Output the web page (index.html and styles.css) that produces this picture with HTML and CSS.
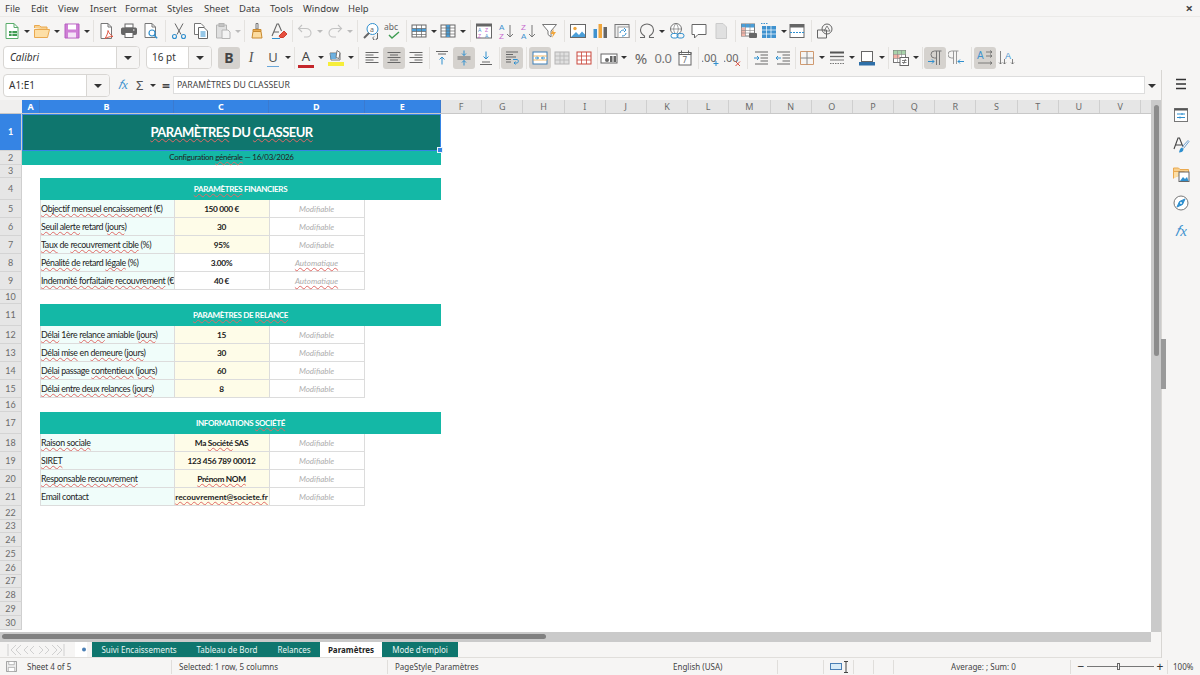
FILE: index.html
```html
<!DOCTYPE html>
<html lang="fr">
<head>
<meta charset="utf-8">
<title>Paramètres</title>
<link rel="stylesheet" href="styles.css">
</head>
<body>
<div class="app">
  <nav class="menubar">
    <span class="m1">File</span><span class="m2">Edit</span><span class="m3">View</span><span class="m4">Insert</span><span class="m5">Format</span><span class="m6">Styles</span><span class="m7">Sheet</span><span class="m8">Data</span><span class="m9">Tools</span><span class="m10">Window</span><span class="m11">Help</span>
    <span class="close">×</span>
  </nav>

  <div class="tb tb1">
    <button class="b"><svg class="i" viewBox="0 0 18 18"><path d="M3 1.500h8l4 4v11H3z" fill="#fff" stroke="#5aac6b"/><path d="M11 1.500v4h4" stroke="#5aac6b"/><rect x="6" y="9" width="8" height="5" fill="#3f9c52" stroke="none"/><path d="M9 9v5M6 11.500h8" stroke="#fff" stroke-width=".7"/></svg></button><i class="car"></i>
    <button class="b"><svg class="i" viewBox="0 0 18 18"><path d="M1.500 6V3.500h5l1.500 1.500h6V8" fill="#f8d08e" stroke="#eaa94f"/><path d="M1.500 15.500V7.500h15l-2 8z" fill="#fddfa6" stroke="#eaa94f"/></svg></button><i class="car"></i>
    <button class="b"><svg class="i" viewBox="0 0 18 18"><path d="M2 2h14v14H2z" fill="#cf7fd6" stroke="#b65fc0"/><rect x="5" y="2.500" width="8" height="5" fill="#fff" stroke="none"/><rect x="5" y="10.500" width="8" height="5" fill="#f5e3f7" stroke="none"/></svg></button><i class="car"></i>
    <u class="sep"></u>
    <button class="b"><svg class="i" viewBox="0 0 18 18"><path d="M4 1.500h7l3.500 3.500v11.500H4z" fill="#fff" stroke="#777"/><path d="M11 1.500V5h3.500" stroke="#777"/><path d="M8 16.500c2-3 3-6 3-8 1 3 3 5 5 6-3 0-5 .5-8 2z" stroke="#e05a47"/></svg></button>
    <button class="b b-g1"><svg class="i" viewBox="0 0 18 18"><rect x="5" y="2" width="8" height="4" fill="#fff" stroke="#666"/><rect x="1.500" y="6" width="15" height="6.500" rx="1" fill="#666" stroke="#666"/><rect x="5" y="10.500" width="8" height="5" fill="#fff" stroke="#666"/><path d="M13 8h1.500" stroke="#fff"/></svg></button>
    <button class="b"><svg class="i" viewBox="0 0 18 18"><path d="M3 1.500h7l3.500 3.500v10.500H3z" fill="#fff" stroke="#777"/><path d="M10 1.500V5h3.500" stroke="#777"/><circle cx="10" cy="11" r="3" fill="#fff" stroke="#2f8fce" stroke-width="1.200"/><path d="M12.200 13.200l3 3" stroke="#2f8fce" stroke-width="1.400"/></svg></button>
    <u class="sep sep-w"></u>
    <button class="b"><svg class="i" viewBox="0 0 18 18"><path d="M5 1.500l6 11M13 1.500l-6 11" stroke="#666"/><circle cx="4.500" cy="14.500" r="2" stroke="#2f8fce" stroke-width="1.100"/><circle cx="13.500" cy="14.500" r="2" stroke="#2f8fce" stroke-width="1.100"/></svg></button>
    <button class="b"><svg class="i" viewBox="0 0 18 18"><path d="M2.500 1.500h6.500l3 3v8H2.500z" fill="#fff" stroke="#777"/><path d="M6.500 5.500H12l3.500 3.500v7.500h-9z" fill="#fff" stroke="#666"/><path d="M8.500 10h5M8.500 12h5M8.500 14h5" stroke="#2f8fce"/></svg></button>
    <button class="b"><svg class="i dim" viewBox="0 0 18 18"><path d="M2.500 3h10v13h-10z" fill="#ddd" stroke="#aaa"/><rect x="5" y="1.500" width="5" height="3" fill="#bbb" stroke="#aaa"/><path d="M8 8h6l2 2v6.500H8z" fill="#f3f3f3" stroke="#aaa"/></svg></button><i class="car dimc"></i>
    <u class="sep"></u>
    <button class="b"><svg class="i" viewBox="0 0 18 18"><path d="M8 1.500h2V7H8z" stroke="#777"/><path d="M5 7.500h8v2H5z" fill="#e9ac52" stroke="#c98a30"/><path d="M5 9.500h8l1 6.500H4z" fill="#fcdca0" stroke="#c98a30"/></svg></button>
    <button class="b"><svg class="i" viewBox="0 0 18 18"><path d="M2 14L7 2h1.500l3 7M4 10h5" stroke="#666" stroke-width="1.100"/><path d="M9 14l5-5 3 3-3.500 3.500H10z" fill="#e6503f" stroke="#d04030"/><path d="M2 16.500h8" stroke="#2f8fce"/></svg></button>
    <u class="sep"></u>
    <button class="b"><svg class="i dim" viewBox="0 0 18 18"><path d="M6 3L2.500 6.500 6 10M3 6.500h7c3 0 5 2 5 4.500s-2 4-4 4H8" stroke="#bbb" stroke-width="1.100"/></svg></button><i class="car dimc"></i>
    <button class="b"><svg class="i dim" viewBox="0 0 18 18"><path d="M12 3l3.500 3.500L12 10M15 6.500H8c-3 0-5 2-5 4.500s2 4 4 4h3" stroke="#bbb" stroke-width="1.100"/></svg></button><i class="car dimc"></i>
    <u class="sep sep-x"></u>
    <button class="b"><svg class="i" viewBox="0 0 18 18"><circle cx="10.500" cy="7" r="5.500" fill="#fff" stroke="#2f8fce"/><text x="8" y="9.500" class="svt" font-size="7">a</text><path d="M7 11l-5 5" stroke="#666" stroke-width="2"/><path d="M12 14.500a2 2 0 1 0 3 1.500M15.500 11v6" stroke="#666"/></svg></button>
    <button class="b"><svg class="i" viewBox="0 0 18 18"><text x="0" y="8" class="svt" font-size="8.500">abc</text><path d="M5 13l3 3 7-6" stroke="#3f9c52" stroke-width="1.400"/></svg></button>
    <u class="sep"></u>
    <button class="b"><svg class="i" viewBox="0 0 18 18"><rect x="2" y="3" width="14" height="12" fill="#fff" stroke="#666"/><rect x="2" y="6.500" width="14" height="3" fill="#4a9ed8" stroke="none"/><path d="M2 6.500h14M2 9.500h14M2 12.500h14M6.500 3v12M11.500 3v12" stroke="#666" stroke-width=".7"/></svg></button><i class="car"></i>
    <button class="b b-n1"><svg class="i" viewBox="0 0 18 18"><rect x="2" y="3" width="14" height="12" fill="#fff" stroke="#666"/><rect x="7" y="3" width="4" height="12" fill="#4a9ed8" stroke="none"/><path d="M7 3v12M11 3v12M2 6h14M2 9h14M2 12h14" stroke="#666" stroke-width=".7"/></svg></button><i class="car"></i>
    <u class="sep sep-w"></u>
    <button class="b"><svg class="i" viewBox="0 0 18 18"><rect x="1.500" y="2" width="15" height="14" fill="#fff" stroke="#666"/><rect x="1.500" y="2" width="15" height="2.500" fill="#666" stroke="none"/><text x="3" y="9.800" class="svt sv-b" font-size="5">A</text><text x="10" y="9.800" class="svt sv-p" font-size="5">Z</text><text x="3" y="15.500" class="svt sv-p" font-size="5">Z</text><text x="10" y="15.500" class="svt sv-b" font-size="5">A</text></svg></button>
    <button class="b"><svg class="i" viewBox="0 0 18 18"><text x="2" y="7.500" class="svt sv-b" font-size="8">A</text><text x="2" y="16.800" class="svt sv-p" font-size="8">Z</text><path d="M13 3v12M10 12l3 3 3-3" stroke="#777"/></svg></button>
    <button class="b"><svg class="i" viewBox="0 0 18 18"><text x="2" y="7.500" class="svt sv-p" font-size="8">Z</text><text x="2" y="16.800" class="svt sv-b" font-size="8">A</text><path d="M13 3v12M10 12l3 3 3-3" stroke="#777"/></svg></button>
    <button class="b"><svg class="i" viewBox="0 0 18 18"><path d="M1.500 2.500h14L10 9v6l-3-2.500V9z" fill="#fff" stroke="#777"/><path d="M12.500 7l-3 5h2.500l-1 4 4-6h-2.500z" fill="#f0a63c" stroke="none"/></svg></button>
    <u class="sep sep-w"></u>
    <button class="b"><svg class="i" viewBox="0 0 18 18"><rect x="1.500" y="2.500" width="15" height="13" fill="#fff" stroke="#666"/><circle cx="6" cy="6.500" r="1.700" fill="#f0a63c" stroke="none"/><path d="M2 15l5-5 3 3 3-3.500 3 3V15z" fill="#4a9ed8" stroke="none"/></svg></button>
    <button class="b"><svg class="i" viewBox="0 0 18 18"><rect x="2.500" y="7" width="3.500" height="9" fill="#3f92cf" stroke="none"/><rect x="7.500" y="2" width="3.500" height="14" fill="#f0a63c" stroke="none"/><rect x="12.500" y="5" width="3.500" height="11" fill="#666" stroke="none"/></svg></button>
    <button class="b"><svg class="i" viewBox="0 0 18 18"><rect x="2" y="2.500" width="14" height="13" fill="#eee" stroke="#777"/><rect x="5" y="5" width="11" height="10.500" fill="#fff" stroke="#999"/><path d="M7 11c0-2 2-3 4-3M11 6l2 2-2 2M13 11c0 2-2 3-4 3" stroke="#2f8fce"/></svg></button>
    <u class="sep sep-n"></u>
    <button class="b"><svg class="i" viewBox="0 0 18 18"><path d="M2 15.500h4.500V14C4 12.500 2.500 10.500 2.500 8c0-3.500 3-6 6.500-6s6.500 2.500 6.500 6c0 2.500-1.500 4.500-4 6v1.500H16" stroke="#666" stroke-width="1.100"/></svg></button><i class="car"></i>
    <button class="b"><svg class="i" viewBox="0 0 18 18"><circle cx="8" cy="7" r="5.500" fill="#fff" stroke="#777"/><path d="M2.500 7h11M8 1.500c-3 3-3 8 0 11M8 1.500c3 3 3 8 0 11" stroke="#777" stroke-width=".7"/><rect x="3" y="11.500" width="7" height="4.500" rx="2.200" fill="#fff" stroke="#2f8fce"/><rect x="9" y="11.500" width="7" height="4.500" rx="2.200" stroke="#2f8fce"/></svg></button>
    <button class="b"><svg class="i" viewBox="0 0 18 18"><path d="M2 2.500h14v10H8l-3.500 3.500v-3.500H2z" fill="#fff" stroke="#666"/></svg></button>
    <button class="b"><svg class="i dim" viewBox="0 0 18 18"><path d="M4 1.500h7l3.500 3.500v11.500H4z" fill="#ddd" stroke="#c4c4c4"/></svg></button>
    <u class="sep sep-w"></u>
    <button class="b"><svg class="i" viewBox="0 0 18 18"><rect x="1.500" y="2" width="13" height="12" fill="#fff" stroke="#777"/><rect x="1.500" y="2" width="13" height="3.500" fill="#4a9ed8" stroke="none"/><rect x="1.500" y="5.500" width="4" height="8.500" fill="#f1b4a8" stroke="none"/><path d="M1.500 8.500h13M1.500 11h13M5.500 2v12M10 2v12" stroke="#888" stroke-width=".6"/><rect x="9" y="11" width="8" height="5" rx="1" fill="#666" stroke="none"/></svg></button>
    <button class="b b-n2"><svg class="i" viewBox="0 0 18 18"><rect x="2" y="4" width="14" height="12" fill="#3f92cf" stroke="none"/><path d="M2 8h14M2 12h14M6.500 4v12M11 4v12" stroke="#fff" stroke-width=".7"/><path d="M1 1.500h7" stroke="#3f92cf" stroke-dasharray="1.500 1"/></svg></button><i class="car"></i>
    <button class="b b-n2"><svg class="i" viewBox="0 0 18 18"><rect x="2" y="2.500" width="14" height="13" fill="#fff" stroke="#666"/><rect x="2" y="2.500" width="14" height="3" fill="#666" stroke="none"/><path d="M2 10.500h14" stroke="#2f8fce" stroke-dasharray="2 1"/></svg></button>
    <u class="sep sep-w"></u>
    <button class="b"><svg class="i" viewBox="0 0 18 18"><path d="M1.500 8h9v8h-9z" stroke="#666"/><circle cx="11" cy="7" r="5" stroke="#666"/><path d="M8 9l3-5 3 5z" stroke="#666" stroke-width=".8"/></svg></button>
  </div>

  <div class="tb tb2">
    <div class="combo c-font"><span class="val it">Calibri</span><span class="drop"><i class="car big"></i></span></div>
    <div class="combo c-size"><span class="val">16 pt</span><span class="drop"><i class="car big"></i></span></div>
    <button class="b on"><span class="gl bold">B</span></button>
    <button class="b"><span class="gl ital">I</span></button>
    <button class="b"><span class="gl und">U</span></button><i class="car"></i>
    <u class="sep sep-n"></u>
    <button class="b"><span class="gl col">A</span></button><i class="car"></i>
    <button class="b"><svg class="i" viewBox="0 0 18 18"><path d="M3 4h7l3 0v7H4z" fill="#fff" stroke="#777"/><path d="M3.500 4h6v6h-6z" fill="#4a9ed8" stroke="none" opacity=".8"/><path d="M10 1.500l3 2-1 6-3-1z" fill="#fff" stroke="#777"/><rect x="1" y="13" width="16" height="4" fill="#f6ee3a" stroke="none"/></svg></button><i class="car"></i>
    <u class="sep sep-w"></u>
    <button class="b"><svg class="i" viewBox="0 0 18 18"><path d="M2.500 3.500h13M2.500 6h8M2.500 8.500h13M2.500 11h8M2.500 13.500h13" stroke="#666"/></svg></button>
    <button class="b on"><svg class="i" viewBox="0 0 18 18"><path d="M2.500 3.500h13M5 6h8M2.500 8.500h13M5 11h8M2.500 13.500h13" stroke="#666"/></svg></button>
    <button class="b"><svg class="i" viewBox="0 0 18 18"><path d="M2.500 3.500h13M7.500 6h8M2.500 8.500h13M7.500 11h8M2.500 13.500h13" stroke="#666"/></svg></button>
    <u class="sep"></u>
    <button class="b"><svg class="i" viewBox="0 0 18 18"><path d="M3 2.500h12M5 5h8" stroke="#666"/><path d="M9 15.500V8M6.500 10.500L9 8l2.500 2.500" stroke="#2f8fce"/></svg></button>
    <button class="b on"><svg class="i" viewBox="0 0 18 18"><path d="M2.500 8h13M2.500 10h13" stroke="#666"/><path d="M9 1.500V6.500M7 4.500l2 2 2-2M9 16.500V11.500M7 13.500l2-2 2 2" stroke="#2f8fce"/></svg></button>
    <button class="b"><svg class="i" viewBox="0 0 18 18"><path d="M5 13h8M3 15.500h12" stroke="#666"/><path d="M9 2.500V10M6.500 7.500L9 10l2.500-2.500" stroke="#2f8fce"/></svg></button>
    <u class="sep"></u>
    <button class="b on"><svg class="i" viewBox="0 0 18 18"><path d="M3 3h12M3 5.500h7M3 8h10M3 10.500h5M3 13h5" stroke="#666"/><path d="M10 10.500h4c1.500 0 2 3 0 3.500h-2M12.500 12.500l-1.500 1.500 1.500 1.500" stroke="#2f8fce"/></svg></button>
    <u class="sep sep-w"></u>
    <button class="b on"><svg class="i" viewBox="0 0 18 18"><rect x="2" y="3" width="14" height="12" fill="#fff" stroke="#3f7fb5"/><path d="M2 7h14M2 11h14" stroke="#f0a63c" stroke-width=".8"/><path d="M4 9h3.500M14 9h-3.500M6 7.500L7.500 9 6 10.500M12 7.500L10.500 9l1.500 1.500" stroke="#2f8fce"/></svg></button>
    <button class="b"><svg class="i dim" viewBox="0 0 18 18"><rect x="2" y="3" width="14" height="12" fill="#ddd" stroke="#aaa"/><path d="M2 7h14M2 11h14M7 3v12M11 3v12" stroke="#aaa" stroke-width=".8"/></svg></button>
    <button class="b"><svg class="i" viewBox="0 0 18 18"><rect x="2" y="3" width="14" height="12" fill="#fff" stroke="#c9483c"/><path d="M2 7h14M2 11h14M6.500 3v12M11.500 3v12" stroke="#c9483c" stroke-width=".8"/></svg></button>
    <u class="sep sep-n"></u>
    <button class="b"><svg class="i" viewBox="0 0 18 18"><rect x="1" y="5" width="16" height="9" fill="#fff" stroke="#666"/><circle cx="7" cy="11" r="2" fill="#666" stroke="none"/><rect x="10" y="7" width="2.500" height="6" fill="#666" stroke="none"/><rect x="13.500" y="7" width="2.500" height="6" fill="#666" stroke="none"/></svg></button><i class="car"></i>
    <button class="b b-pc"><span class="gl pct">%</span></button>
    <button class="b"><span class="gl num">0.0</span></button>
    <button class="b"><svg class="i" viewBox="0 0 18 18"><rect x="3" y="3.500" width="12" height="12.500" fill="#fff" stroke="#666"/><path d="M3 3.500h12v2H3zM5.500 1.500v3M12.500 1.500v3" stroke="#666"/><text x="6.500" y="14" class="svt" font-size="8">7</text></svg></button>
    <u class="sep"></u>
    <button class="b"><svg class="i" viewBox="0 0 18 18"><text x="-1" y="13" class="svt" font-size="11">.00</text><path d="M14 12v5M11.500 14.500h5" stroke="#2f8fce"/></svg></button>
    <button class="b"><svg class="i" viewBox="0 0 18 18"><text x="-1" y="13" class="svt" font-size="11">.00</text><path d="M11.500 12.500l4.500 4.500M16 12.500L11.500 17" stroke="#d9503f"/></svg></button>
    <u class="sep sep-w"></u>
    <button class="b"><svg class="i" viewBox="0 0 18 18"><path d="M3 3h13M8.500 6h7.500M8.500 9h7.500M8.500 12h7.500M3 15h13" stroke="#666"/><path d="M2 9h5M5 7l2 2-2 2" stroke="#2f8fce"/></svg></button>
    <button class="b"><svg class="i" viewBox="0 0 18 18"><path d="M3 3h13M8.500 6h7.500M8.500 9h7.500M8.500 12h7.500M3 15h13" stroke="#666"/><path d="M7 9H2M4 7L2 9l2 2" stroke="#2f8fce"/></svg></button>
    <u class="sep sep-t"></u>
    <button class="b"><svg class="i" viewBox="0 0 18 18"><path d="M2.500 2.500h13v13h-13z" stroke="#d09a70"/><path d="M9 2.500v13M2.500 9h13" stroke="#888"/></svg></button><i class="car"></i>
    <button class="b"><svg class="i" viewBox="0 0 18 18"><path d="M2 3.500h14" stroke="#555" stroke-width="2"/><path d="M2 7.500h14" stroke="#666" stroke-width="1.300"/><path d="M2 11h14" stroke="#777"/><path d="M2 14.500h14" stroke="#777" stroke-dasharray="1.500 1"/></svg></button><i class="car"></i>
    <button class="b"><svg class="i" viewBox="0 0 18 18"><rect x="3.500" y="2.500" width="11" height="10" fill="#fff" stroke="#666"/><rect x="1" y="13" width="16" height="3.500" fill="#2e6fa8" stroke="none"/></svg></button><i class="car"></i>
    <u class="sep"></u>
    <button class="b"><svg class="i" viewBox="0 0 18 18"><rect x="1.500" y="1.500" width="12" height="12" fill="#fff" stroke="#777"/><rect x="1.500" y="1.500" width="12" height="4" fill="#a8d4ab" stroke="none"/><rect x="1.500" y="5.500" width="6" height="4" fill="#f2b0a4" stroke="none"/><path d="M1.500 5.500h12M1.500 9.500h12M5.500 1.500v12M9.500 1.500v12" stroke="#888" stroke-width=".6"/><rect x="8" y="8.500" width="8.500" height="8" fill="#fff" stroke="#666"/><path d="M10 11.500h4.500M10 13.500h4.500M13.500 10l-2 5" stroke="#666" stroke-width=".8"/></svg></button><i class="car"></i>
    <u class="sep"></u>
    <button class="b on"><svg class="i" viewBox="0 0 18 18"><path d="M10.500 2v14M13.500 2v14M15.500 2h-7a3.500 3.500 0 0 0 0 7h2" stroke="#777"/><path d="M2 12.500h6M6 10.500l2 2-2 2" stroke="#2f8fce"/></svg></button>
    <button class="b"><svg class="i" viewBox="0 0 18 18"><path d="M5.500 2v13M8.500 2v13M10.500 2h-7a3.500 3.500 0 0 0 0 7h2" stroke="#999"/><path d="M16 12.500h-6M12 10.500l-2 2 2 2" stroke="#2f8fce"/></svg></button>
    <u class="sep sep-w"></u>
    <button class="b on"><svg class="i" viewBox="0 0 18 18"><text x="1" y="10" class="svt sv-b" font-size="10">A</text><path d="M10 3h6M14 1.500l2 1.500-2 1.500M10 7h6M14 5.500l2 1.500-2 1.500M2 14h14M14 12.500l2 1.500-2 1.500" stroke="#666" stroke-width=".8"/></svg></button>
    <button class="b"><svg class="i" viewBox="0 0 18 18"><text x="7" y="10" class="svt sv-b" font-size="9">A</text><path d="M2.500 2v13M1 13.500l1.500 1.500L4 13.500M6.500 10v5M5 13.500L6.500 15 8 13.500M14.500 10v5M13 13.500l1.500 1.500 1.500-1.500" stroke="#666" stroke-width=".8"/></svg></button>
  </div>

  <div class="work">
    <div class="main">
      <div class="tb3">
        <div class="combo c-name"><span class="val">A1:E1</span><span class="drop"><i class="car big"></i></span></div>
        <span class="fx">𝑓x</span>
        <span class="sigma">Σ</span><i class="car"></i>
        <span class="eq">=</span>
        <div class="input">PARAMÈTRES DU CLASSEUR</div>
        <i class="car big"></i>
      </div>

      <div class="grid-wrap">
        <div class="sheet">
          <div class="colhead">
            <span class="rh corner"></span>
            <span class="ch sel ca">A</span><span class="ch sel cb">B</span><span class="ch sel cc">C</span><span class="ch sel cd">D</span><span class="ch sel ce">E</span>
            <span class="ch n">F</span><span class="ch n">G</span><span class="ch n">H</span><span class="ch n">I</span><span class="ch n">J</span><span class="ch n">K</span><span class="ch n">L</span><span class="ch n">M</span><span class="ch n">N</span><span class="ch n">O</span><span class="ch n">P</span><span class="ch n">Q</span><span class="ch n">R</span><span class="ch n">S</span><span class="ch n">T</span><span class="ch n">U</span><span class="ch n">V</span><span class="ch n"></span>
          </div>

          <div class="row r1"><span class="rh sel">1</span><div class="title"><span class="ttl"><span class="sp">PARAMÈTRES</span> DU <span class="sp">CLASSEUR</span></span><i class="handle"></i></div></div>
          <div class="row r2"><span class="rh">2</span><div class="subtitle"><span>Configuration <span class="sp">générale</span> — 16/03/2026</span></div></div>
          <div class="row rs"><span class="rh">3</span></div>
          <div class="row r4"><span class="rh">4</span><span class="a"></span><div class="sec"><span><span class="sp">PARAMÈTRES</span> FINANCIERS</span></div></div>
          <div class="row rd"><span class="rh">5</span><span class="a"></span><div class="lab"><span class="sp">Objectif mensuel encaissement</span> (€)</div><div class="val-c ye">150 000 €</div><div class="note">Modifiable</div></div>
          <div class="row rd"><span class="rh">6</span><span class="a"></span><div class="lab"><span class="sp">Seuil alerte</span> retard (<span class="sp">jours</span>)</div><div class="val-c ye">30</div><div class="note">Modifiable</div></div>
          <div class="row rd"><span class="rh">7</span><span class="a"></span><div class="lab"><span class="sp">Taux</span> de <span class="sp">recouvrement cible</span> (%)</div><div class="val-c ye">95%</div><div class="note">Modifiable</div></div>
          <div class="row rd"><span class="rh">8</span><span class="a"></span><div class="lab"><span class="sp">Pénalité de</span> retard <span class="sp">légale</span> (%)</div><div class="val-c">3.00%</div><div class="note"><span class="sp">Automatique</span></div></div>
          <div class="row rd"><span class="rh">9</span><span class="a"></span><div class="lab"><span class="sp">Indemnité forfaitaire recouvrement</span> (€)</div><div class="val-c">40 €</div><div class="note"><span class="sp">Automatique</span></div></div>
          <div class="row rs"><span class="rh">10</span></div>
          <div class="row r4"><span class="rh">11</span><span class="a"></span><div class="sec"><span><span class="sp">PARAMÈTRES</span> DE <span class="sp">RELANCE</span></span></div></div>
          <div class="row rd"><span class="rh">12</span><span class="a"></span><div class="lab"><span class="sp">Délai</span> 1ère <span class="sp">relance</span> amiable (<span class="sp">jours</span>)</div><div class="val-c ye">15</div><div class="note">Modifiable</div></div>
          <div class="row rd"><span class="rh">13</span><span class="a"></span><div class="lab"><span class="sp">Délai mise</span> en <span class="sp">demeure</span> (<span class="sp">jours</span>)</div><div class="val-c ye">30</div><div class="note">Modifiable</div></div>
          <div class="row rd"><span class="rh">14</span><span class="a"></span><div class="lab"><span class="sp">Délai</span> passage <span class="sp">contentieux</span> (<span class="sp">jours</span>)</div><div class="val-c ye">60</div><div class="note">Modifiable</div></div>
          <div class="row rd"><span class="rh">15</span><span class="a"></span><div class="lab"><span class="sp">Délai entre deux relances</span> (<span class="sp">jours</span>)</div><div class="val-c ye">8</div><div class="note">Modifiable</div></div>
          <div class="row rs"><span class="rh">16</span></div>
          <div class="row r4"><span class="rh">17</span><span class="a"></span><div class="sec"><span>INFORMATIONS <span class="sp">SOCIÉTÉ</span></span></div></div>
          <div class="row rd"><span class="rh">18</span><span class="a"></span><div class="lab"><span class="sp">Raison sociale</span></div><div class="val-c ye">Ma <span class="sp">Société</span> SAS</div><div class="note">Modifiable</div></div>
          <div class="row rd"><span class="rh">19</span><span class="a"></span><div class="lab"><span class="sp">SIRET</span></div><div class="val-c ye">123 456 789 00012</div><div class="note">Modifiable</div></div>
          <div class="row rd"><span class="rh">20</span><span class="a"></span><div class="lab"><span class="sp">Responsable recouvrement</span></div><div class="val-c ye"><span class="sp">Prénom NOM</span></div><div class="note">Modifiable</div></div>
          <div class="row rd"><span class="rh">21</span><span class="a"></span><div class="lab">Email contact</div><div class="val-c ye email"><span class="sp">recouvrement@societe.fr</span></div><div class="note">Modifiable</div></div>
          <div class="row rs"><span class="rh">22</span></div>
          <div class="row rs"><span class="rh">23</span></div>
          <div class="row rs"><span class="rh">24</span></div>
          <div class="row rs"><span class="rh">25</span></div>
          <div class="row rs"><span class="rh">26</span></div>
          <div class="row rs"><span class="rh">27</span></div>
          <div class="row rs"><span class="rh">28</span></div>
          <div class="row rs"><span class="rh">29</span></div>
          <div class="row rs"><span class="rh">30</span></div>
        </div>
        <div class="vscroll"><div class="vthumb"></div></div>
      </div>

      <div class="hscroll"><div class="hthumb"></div></div>

      <div class="tabbar">
        <div class="tabnav">
          <svg class="navs" viewBox="0 0 60 14"><path d="M2 1v12M10 2L5 7l5 5M15 2l-5 5 5 5M22 3l-4 4 4 4M28 3l-4 4 4 4M33 3l4 4-4 4M39 3l4 4-4 4M46 2l5 5-5 5M51 2l5 5-5 5M58 1v12" stroke="#d0d0d0" fill="none"/></svg>
        </div>
        <div class="addtab"><svg class="addi" viewBox="0 0 12 15"><path d="M0 0h12v15H0z" fill="#fff"/><circle cx="9" cy="7.500" r="2" fill="#4a7fb5"/></svg></div>
        <span class="tab t1">Suivi Encaissements</span><span class="tab t2">Tableau de Bord</span><span class="tab t3">Relances</span><span class="tab active">Paramètres</span><span class="tab t5">Mode d'emploi</span>
      </div>
    </div>

    <aside class="side">
      <svg class="si s0" viewBox="0 0 18 18"><path d="M4 4.500h10M4 9h10M4 13.500h10" stroke="#333" stroke-width="1.500"/></svg>
      <svg class="si s1" viewBox="0 0 18 18"><rect x="2.500" y="2.500" width="13" height="13" fill="#fff" stroke="#777"/><path d="M2.500 3.500h13" stroke="#555" stroke-width="2"/><path d="M5 8h8M5 11.500h8" stroke="#2f8fce"/><path d="M10 7v2M8 10.500v2" stroke="#2f8fce"/></svg>
      <svg class="si s2" viewBox="0 0 18 18"><path d="M2 13L6 2h1.500L11 11M3.500 9h6" stroke="#444" stroke-width="1.100"/><path d="M10 11l6-6.500 1 1-5.500 7" stroke="#6a9ed0"/><path d="M7 16.500c2.500 0 4.500-1 4.500-3.500l-1.500-1.500c-2 .5-2.500 3-3 5z" fill="#2f8fce"/></svg>
      <svg class="si s3" viewBox="0 0 18 18"><path d="M1.500 13V3h5l1.500 1.500h8.500V8" fill="#f8d08e" stroke="#eaa94f"/><path d="M1.500 13.500V6.500h11" fill="#fddfa6" stroke="#eaa94f"/><rect x="7" y="7" width="10" height="9.500" fill="#fff" stroke="#666"/><path d="M8 16l3-4 2 2 2-2 1.500 4z" fill="#2f8fce"/></svg>
      <svg class="si s4" viewBox="0 0 18 18"><circle cx="9" cy="9" r="7" fill="#fff" stroke="#777"/><path d="M13 5l-2.500 5.500L5 13l2.500-5.500z" fill="#2f8fce" stroke="#2f8fce"/><circle cx="9" cy="9" r="1" fill="#fff"/></svg>
      <span class="si-fx">𝑓x</span>
      <i class="deck"></i>
    </aside>
  </div>

  <footer class="status">
    <span class="st s-a"><svg class="doc" viewBox="0 0 12 12"><path d="M.5.500h11v11H.5z" fill="#eee" stroke="#999"/><path d="M3 .500h6v3.500H3zM2.500 7h7v4.500h-7z" fill="#fff" stroke="#999" stroke-width=".7"/></svg>Sheet 4 of 5</span>
    <span class="st s-b">Selected: 1 row, 5 columns</span>
    <span class="st s-c">PageStyle_Paramètres</span>
    <span class="st s-d">English (USA)</span>
    <span class="st s-e"></span>
    <span class="st s-f"><svg class="selm" viewBox="0 0 20 12"><rect x=".5" y="2.500" width="11" height="6" fill="#d8ecf8" stroke="#4a7fb5"/><path d="M14 .5h4M16 .5v11M14 11.500h4" stroke="#444" fill="none"/></svg></span>
    <span class="st s-f2"></span><span class="st s-f2"></span>
    <span class="st s-g">Average: ; Sum: 0</span>
    <span class="st s-h"><b class="minus">−</b><i class="track"><i class="knob"></i></i><b class="plus">+</b></span>
    <span class="st s-i">100%</span>
  </footer>
</div>
</body>
</html>
```

FILE: styles.css
```css
* { box-sizing: border-box; }
html, body { margin: 0; padding: 0; }
body { width: 1200px; height: 675px; overflow: hidden; background: #f6f5f4; font-family: "Noto Sans", sans-serif; color: #333; }
.app { width: 1200px; height: 675px; display: flex; flex-direction: column; }

/* menu */
.menubar { height: 17px; flex: none; display: flex; align-items: center; padding-left: 5px; font-size: 9.500px; color: #3d3d3d; border-bottom: 1px solid #ebeae8; position: relative; }
.menubar span { display: block; }
.m1 { width: 26px; } .m2 { width: 27px; } .m3 { width: 32px; } .m4 { width: 35px; } .m5 { width: 42px; } .m6 { width: 37px; } .m7 { width: 35px; } .m8 { width: 31px; } .m9 { width: 33px; } .m10 { width: 45px; } .m11 { width: 30px; }
.menubar .close { margin-left: auto; margin-right: 7px; font-size: 13px; font-weight: 700; color: #444; line-height: 1; }

/* toolbars */
.tb { display: flex; align-items: center; flex: none; }
.tb1 { height: 28px; padding-left: 1px; }
.tb2 { height: 25px; padding-left: 3px; }
.b { width: 22px; height: 22px; flex: none; padding: 0; border: 0; background: none; display: flex; align-items: center; justify-content: center; border-radius: 3px; font: inherit; color: #555; }
.b.on { background: #d5d2ce; }
.b-g1 { margin-left: 1px; }
.b-n1 { margin-left: -1px; }
.b-n2 { margin-left: -2px; }
.b-pc { margin-left: 2px; }
.i { width: 18px; height: 18px; fill: none; stroke: none; display: block; }
.dim { opacity: .85; }
.car { display: block; flex: none; width: 8px; height: 8px; position: relative; }
.car::after { content: ""; position: absolute; left: 1px; top: 2.500px; border: 3px solid transparent; border-top: 3.500px solid #333; border-bottom: 0; }
.dimc::after { border-top-color: #bbb; }
.car.big { width: 14px; }
.car.big::after { left: 3px; border-width: 4px; border-top-width: 4.500px; border-bottom: 0; }
.sep { display: block; flex: none; width: 4px; height: 22px; position: relative; text-decoration: none; }
.sep::after { content: ""; position: absolute; left: 50%; top: 0; bottom: 0; width: 1px; background: #e4e2df; }
.sep-w { width: 6px; }
.sep-x { width: 6px; }
.sep-n { width: 3px; }
.sep-t { width: 2px; }
.svt { font-family: "Noto Sans", sans-serif; fill: #666; }
.sv-b { font-family: "Liberation Sans", sans-serif; fill: #3f92cf; }
.sv-p { font-family: "Liberation Sans", sans-serif; fill: #c565cd; }

.combo { display: flex; height: 23px; flex: none; border: 1px solid #d8d6d3; border-radius: 4px; background: #fff; font-size: 10px; color: #333; overflow: hidden; }
.combo .val { flex: 1; padding-left: 6px; line-height: 21px; }
.combo .drop { flex: none; width: 23px; background: #f6f5f4; border-left: 1px solid #d8d6d3; display: flex; align-items: center; justify-content: center; }
.c-font { width: 137px; margin-right: 6px; }
.c-size { width: 66px; margin-right: 6px; }
.c-size .val { padding-left: 5px; }
.it { font-style: italic; }
.gl { display: block; line-height: 1; }
.bold { font: 700 14px "Noto Sans", sans-serif; color: #444; }
.ital { font: italic 400 14px "Liberation Serif", serif; color: #555; }
.und { font: 400 13px "Noto Sans", sans-serif; color: #555; border-bottom: 1.500px solid #6aa7d8; padding: 0 1px; }
.col { font: 400 13px "Noto Sans", sans-serif; color: #444; border-bottom: 3px solid #c4262b; width: 16px; text-align: center; }
.pct { font: 400 15px "Noto Sans", sans-serif; color: #666; }
.num { font: 400 13px "Noto Sans", sans-serif; color: #777; letter-spacing: -.5px; }

/* body */
.work { flex: 1; min-height: 0; display: flex; }
.main { width: 1161px; flex: none; display: flex; flex-direction: column; }
.tb3 { height: 30px; flex: none; display: flex; align-items: center; padding-left: 3px; }
.c-name { width: 107px; }
.c-name .val { padding-left: 5px; }
.fx { margin-left: 8px; width: 15px; font: italic 13px "Liberation Serif", serif; color: #3f92cf; }
.sigma { margin-left: 3px; width: 13px; font-size: 13px; color: #555; }
.eq { margin-left: 5px; width: 11px; font-size: 14px; color: #444; font-weight: 700; }
.input { width: 972px; height: 18px; background: #fff; border: 1px solid #ddd; font-size: 8.700px; line-height: 16px; padding-left: 3px; color: #444; flex: none; }

.grid-wrap { flex: 1; min-height: 0; display: flex; overflow: hidden; }
.sheet { width: 1151px; flex: none; background: #fff; overflow: hidden; }
.vscroll { flex: none; width: 10px; background: #cacaca; padding: 5px 2.500px 0; }
.vthumb { width: 5px; height: 251px; border-radius: 3px; background: #8c8c8c; }

.colhead { display: flex; height: 14px; background: #e6e6e6; border-bottom: 1px solid #c8c8c8; }
.rh { display: flex; width: 22px; flex: none; background: #e6e6e6; color: #6b6b6b; font-size: 9px; align-items: center; justify-content: center; border-right: 1px solid #cfcfcf; border-bottom: 1px solid #d4d4d4; }
.rh.corner { background: #f0efee; border: 0; }
.rh.sel { background: #3584e4; color: #fff; font-weight: 700; }
.ch { display: flex; align-items: center; justify-content: center; font-size: 9px; color: #6b6b6b; border-right: 1px solid #cfcfcf; flex: none; }
.ch.sel { background: #3584e4; color: #fff; font-weight: 700; border-right-color: #3a7ad0; }
.ch.n { width: 41.200px; }
.a { width: 18px; flex: none; display: block; }
.ca { width: 18px; }
.cb { width: 134px; }
.cc { width: 95px; }
.cd { width: 95.500px; }
.ce { width: 76.500px; }

.row { display: flex; font-family: Lato, sans-serif; }
.r1 { height: 36.500px; }
.r2 { height: 14px; }
.rs { height: 13.750px; }
.r4 { height: 22px; }
.rd { height: 18px; }
.sp { text-decoration: underline wavy #e06a66; text-decoration-thickness: 1px; text-underline-offset: 1px; text-decoration-skip-ink: none; }
.title { width: 419px; background: #0f766e; color: #fff; font-weight: 700; font-size: 13px; letter-spacing: -.55px; display: flex; align-items: center; justify-content: center; border: 1px solid #d4ecf8; outline: 1px solid #3584e4; outline-offset: -1px; position: relative; white-space: nowrap; }
.handle { position: absolute; right: -3px; bottom: -3px; width: 6px; height: 6px; background: #3584e4; border: 1px solid #eaf2fb; z-index: 2; }
.subtitle { width: 419px; background: #14b8a6; color: #222; font-size: 8px; letter-spacing: -.3px; padding-bottom: 1px; display: flex; align-items: center; justify-content: center; white-space: nowrap; }
.sec { width: 401px; background: #14b8a6; color: #fff; font-weight: 700; font-size: 8px; letter-spacing: -.33px; display: flex; align-items: center; justify-content: center; white-space: nowrap; }
.lab { width: 133.500px; flex: none; background: #f0fdfa; color: #222; font-size: 8.800px; letter-spacing: -.32px; line-height: 18px; white-space: nowrap; overflow: hidden; border-bottom: 1px solid #dcdcdc; border-left: 1px solid #dcdcdc; }
.val-c { width: 95px; flex: none; font-size: 8.300px; letter-spacing: -.33px; font-weight: 700; color: #1a1a1a; text-align: center; line-height: 18px; white-space: nowrap; overflow: hidden; border-bottom: 1px solid #dcdcdc; border-left: 1px solid #dcdcdc; }
.ye { background: #fefce8; }
.email { letter-spacing: -.02px; }
.note { width: 96px; flex: none; font-size: 8px; font-style: italic; color: #adadad; text-align: center; line-height: 18px; border-bottom: 1px solid #dcdcdc; border-left: 1px solid #dcdcdc; border-right: 1px solid #dcdcdc; }

/* scroll + tabs */
.hscroll { height: 10px; flex: none; background: #cacaca; padding: 2px 2px 0; width: 1151px; }
.hthumb { width: 544px; height: 5px; background: #808080; border-radius: 3px; }
.tabbar { height: 16px; flex: none; display: flex; align-items: stretch; font-size: 8px; border-bottom: 1px solid #e0dedb; }
.tabnav { width: 75px; flex: none; padding: 1px 0 0 6px; }
.navs { display: block; width: 60px; height: 14px; }
.addtab { width: 17px; flex: none; }
.addi { display: block; width: 12px; height: 15px; }
.tab { display: flex; align-items: center; justify-content: center; flex: none; background: #0f766e; color: #e8f5f3; }
.t1 { width: 94px; } .t2 { width: 82px; } .t3 { width: 52px; } .t5 { width: 76px; }
.tab.active { width: 62px; background: #fff; color: #222; font-weight: 700; }

/* sidebar */
.side { flex: 1; border-left: 1px solid #d8d6d3; position: relative; display: flex; flex-direction: column; align-items: center; padding-top: 5px; }
.si { display: block; width: 18px; height: 18px; flex: none; fill: none; }
.s0 { margin-bottom: 13px; }
.s1 { margin-bottom: 12px; }
.s2 { margin-bottom: 11px; }
.s3 { margin-bottom: 11px; }
.s4 { margin-bottom: 10px; }
.si-fx { font: italic 15px "Liberation Serif", serif; color: #3f92cf; line-height: 18px; }
.deck { position: absolute; left: -1px; top: 269px; width: 5px; height: 50px; background: #9a9a9a; display: block; }

/* status */
.status { height: 17px; flex: none; display: flex; font-size: 8px; color: #444; align-items: center; }
.st { display: flex; align-items: center; height: 14px; flex: none; border-right: 1px solid #e0dedb; white-space: nowrap; }
.doc { width: 11px; height: 11px; margin: 0 10px 0 6px; }
.s-a { width: 172px; }
.s-b { width: 216px; padding-left: 7px; }
.s-c { width: 278px; padding-left: 7px; border-right: 0; }
.s-d { width: 112px; padding-left: 7px; }
.s-e { width: 46px; }
.s-f { width: 30px; padding-left: 6px; }
.selm { width: 20px; height: 12px; }
.s-f2 { width: 20px; }
.s-g { width: 177px; padding-left: 3px; justify-content: center; }
.s-h { width: 97px; padding-left: 6px; }
.minus, .plus { font-weight: 400; font-size: 12px; color: #333; line-height: 1; width: 8px; text-align: center; }
.track { display: block; width: 67px; height: 1px; background: #777; margin: 0 2px; position: relative; }
.knob { display: block; position: absolute; left: 30px; top: -3px; width: 3px; height: 7px; background: #f6f5f4; border: 1px solid #666; }
.s-i { border: 0; padding-left: 5px; }
```
